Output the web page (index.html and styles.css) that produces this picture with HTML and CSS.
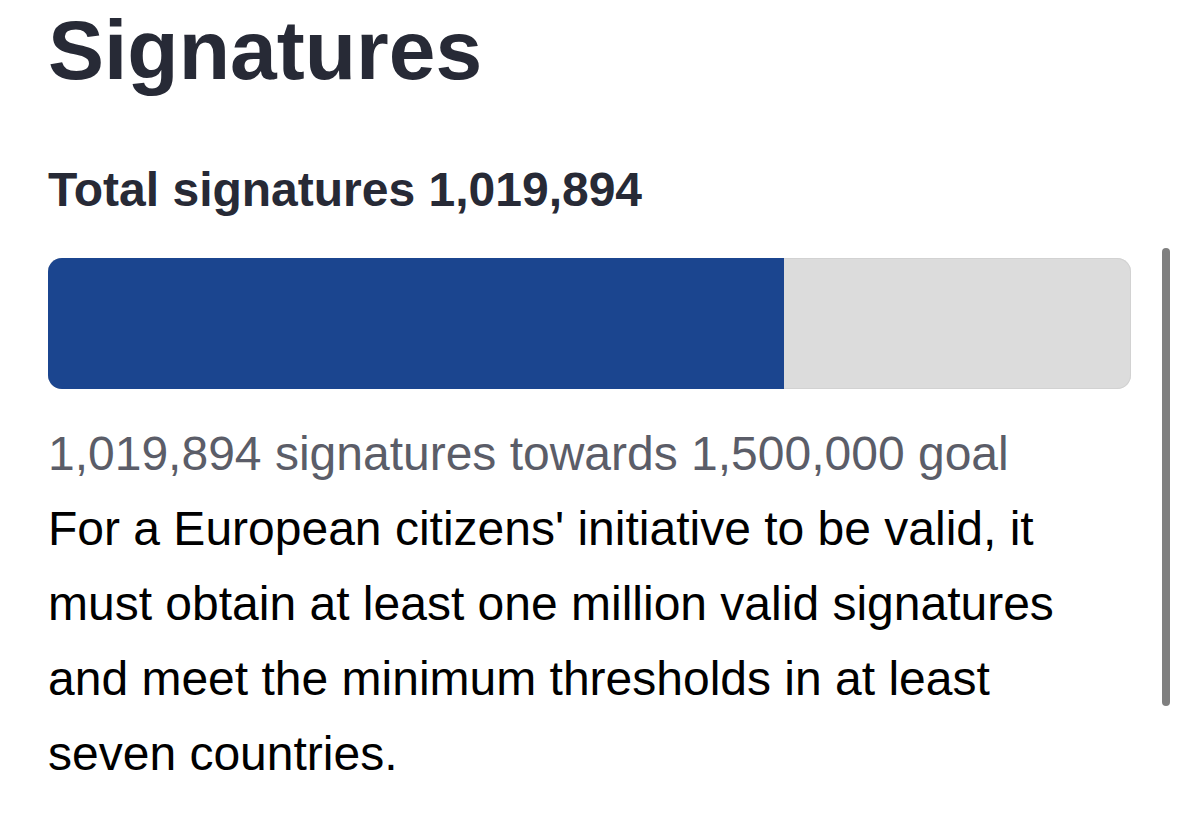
FILE: index.html
```html
<!DOCTYPE html>
<html lang="en">
<head>
    <meta charset="UTF-8">
    <meta name="viewport" content="width=device-width, initial-scale=1.0">
    <title>Signatures</title>
    <link rel="stylesheet" href="styles.css">
</head>
<body>
    <section class="signatures">
        <h1 class="signatures-title">Signatures</h1>
        <h2 class="signatures-total">Total signatures 1,019,894</h2>

        <div class="progress">
            <div class="progress-fill" style="width: 68%"></div>
        </div>

        <p class="progress-label">1,019,894 signatures towards 1,500,000 goal</p>
        <p class="signatures-info">For a European citizens' initiative to be valid, it must obtain at least one million valid signatures and meet the minimum thresholds in at least seven countries.</p>
    </section>

    <div class="scroll-indicator"></div>
</body>
</html>
```

FILE: styles.css
```css
body {
    margin: 0;
    padding: 0;
    background: #ffffff;
    font-family: "Liberation Sans", Arial, Helvetica, sans-serif;
    color: #000000;
}

.signatures {
    padding: 2px 48px 0 48px;
}

.signatures-title {
    margin: 0;
    font-size: 84px;
    line-height: 96px;
    font-weight: bold;
    color: #272a36;
}

.signatures-total {
    margin: 64px 0 0 0;
    font-size: 48px;
    line-height: 56px;
    font-weight: bold;
    color: #272a36;
}

.progress {
    margin-top: 40px;
    height: 131px;
    background: #dcdcdc;
    border-radius: 14px;
    box-shadow: inset 0 0 0 1px #d2d2d2;
    overflow: hidden;
}

.progress-fill {
    height: 100%;
    background: #1b458f;
}

.progress-label {
    margin: 27px 0 0 0;
    font-size: 48px;
    line-height: 75px;
    color: #5b5d68;
}

.signatures-info {
    margin: 0;
    padding-right: 60px;
    font-size: 48px;
    line-height: 75px;
    color: #000000;
}

/* iOS style overlay scrollbar */
.scroll-indicator {
    position: fixed;
    top: 248px;
    left: 1162px;
    width: 8px;
    height: 458px;
    border-radius: 4px;
    background: #7f7f7f;
}
```
